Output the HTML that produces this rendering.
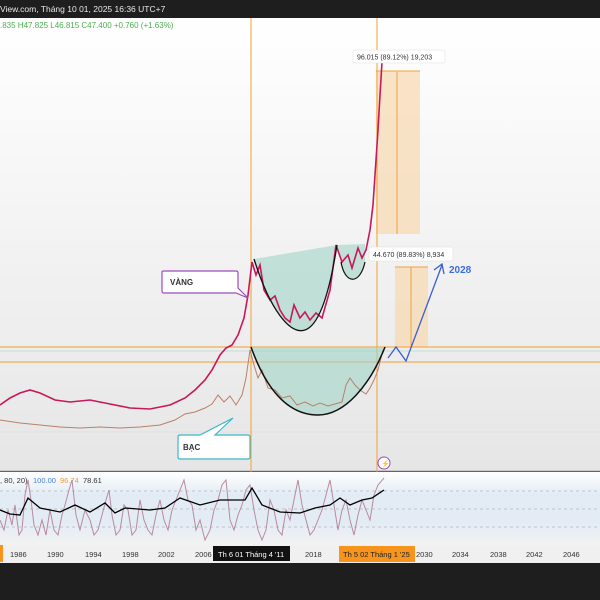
<!DOCTYPE html><html><head><style>
body{margin:0;width:600px;height:600px;overflow:hidden;background:#1e1e1e;font-family:"Liberation Sans",sans-serif}
</style></head><body>
<svg width="600" height="600" xmlns="http://www.w3.org/2000/svg" style="position:absolute;left:0;top:0">
<defs><linearGradient id="bg" x1="0" y1="0" x2="0" y2="1"><stop offset="0" stop-color="#ffffff"/><stop offset="1" stop-color="#e6e6e6"/></linearGradient>
<linearGradient id="ib" x1="0" y1="0" x2="0" y2="1"><stop offset="0" stop-color="#ffffff"/><stop offset="0.3" stop-color="#e3ecf5"/><stop offset="0.7" stop-color="#e3ecf5"/><stop offset="1" stop-color="#f2f2f2"/></linearGradient></defs>
<rect x="0" y="0" width="600" height="18" fill="#1e1e1e"/>
<text x="0" y="12" font-size="8.5" fill="#e8e8e8">View.com, Tháng 10 01, 2025 16:36 UTC+7</text>
<rect x="0" y="18" width="600" height="453" fill="url(#bg)"/>
<text x="0" y="28" font-size="8" fill="#4caf50">.835  H47.825  L46.815  C47.400  +0.760 (+1.63%)</text>
<line x1="0" y1="432" x2="600" y2="432" stroke="#d8d8d8" stroke-width="0.6"/>
<rect x="376" y="71" width="44" height="163" fill="#f7d9b0" opacity="0.7"/>
<line x1="397" y1="72" x2="397" y2="234" stroke="#f0a040" stroke-width="1"/>
<line x1="376" y1="71" x2="420" y2="71" stroke="#f0a040"/>
<rect x="395" y="267" width="33" height="80" fill="#f7d9b0" opacity="0.7"/>
<line x1="411" y1="267" x2="411" y2="347" stroke="#f0a040"/>
<line x1="395" y1="267" x2="428" y2="267" stroke="#f0a040"/>
<line x1="251" y1="18" x2="251" y2="563" stroke="#f5a030" stroke-width="1"/>
<line x1="377" y1="18" x2="377" y2="563" stroke="#f5a030" stroke-width="1"/>
<line x1="0" y1="347" x2="600" y2="347" stroke="#f5a030" stroke-width="1"/>
<line x1="0" y1="351" x2="600" y2="351" stroke="#9cd0c0" stroke-width="0.6"/>
<line x1="0" y1="362" x2="600" y2="362" stroke="#f5a030" stroke-width="1"/>
<!-- teal fills -->
<path d="M254 259 L337 245 C330 290 320 325 305 330 C290 335 270 310 254 259 Z" fill="#9fd4c6" opacity="0.6"/>
<path d="M337 245 L365 244 L365 262 C360 285 345 285 341 262 Z" fill="#9fd4c6" opacity="0.6"/>
<path d="M251 347 L385 347 C370 385 345 415 318 415 C295 415 270 400 251 347 Z" fill="#9fd4c6" opacity="0.6"/>
<!-- silver -->
<path d="M0 420 L20 423 L40 425 L60 427 L80 428 L100 427 L120 428 L140 427 L160 425 L175 420 L185 414 L195 412 L205 408 L212 404 L218 395 L224 402 L230 396 L236 405 L242 395 L246 378 L250 350 L254 365 L258 378 L262 370 L268 388 L275 390 L282 398 L290 396 L297 405 L305 402 L313 406 L320 403 L328 406 L335 404 L342 402 L346 385 L350 378 L355 385 L360 390 L366 394 L370 388 L374 380 L378 370 L383 350" fill="none" stroke="#b9806a" stroke-width="1"/>
<!-- gold -->
<path d="M0 405 L10 398 L20 393 L30 390 L40 393 L55 400 L70 402 L90 400 L110 404 L130 408 L150 409 L170 405 L185 398 L195 390 L205 380 L212 370 L220 355 L226 348 L232 345 L238 335 L244 318 L248 295 L252 262 L256 275 L260 265 L264 290 L270 300 L275 296 L280 310 L285 318 L290 322 L294 305 L300 318 L305 312 L310 320 L316 313 L322 318 L330 290 L336 245 L342 262 L348 255 L352 268 L358 248 L362 258 L366 250 L370 230 L373 205 L376 160 L378 130 L380 95 L382 62" fill="none" stroke="#c8185a" stroke-width="1.6"/>
<!-- black arcs -->
<path d="M254 259 C270 310 290 335 305 330 C320 325 330 290 337 245" fill="none" stroke="#111" stroke-width="1.3"/>
<path d="M341 262 C345 285 360 285 365 262" fill="none" stroke="#111" stroke-width="1.2"/>
<path d="M251 347 C270 400 295 415 318 415 C345 415 370 385 385 347" fill="none" stroke="#111" stroke-width="1.5"/>
<path d="M388 358 L396 347 L406 361 L442 265 M434 270 L442 264 L444 274" fill="none" stroke="#3a5fd0" stroke-width="1.3"/>
<text x="449" y="273" font-size="10" font-weight="bold" fill="#3a6fd8">2028</text>
<rect x="353" y="50" width="92" height="13" rx="2" fill="#fff" stroke="#ddd" stroke-width="0.5"/>
<text x="357" y="59.5" font-size="7" fill="#333">96.015 (89.12%) 19,203</text>
<rect x="369" y="247" width="84" height="14" rx="2" fill="#fff" stroke="#ddd" stroke-width="0.5"/>
<text x="373" y="257" font-size="7" fill="#333">44.670 (89.83%) 8,934</text>
<path d="M162 272 Q162 271 164 271 L236 271 Q238 271 238 273 L238 288 L248 298 L236 293 L164 293 Q162 293 162 291 Z" fill="#fff" stroke="#9b4dbb" stroke-width="1.2"/>
<text x="170" y="285" font-size="8" font-weight="bold" fill="#333">VÀNG</text>
<path d="M178 437 L178 457 Q178 459 180 459 L248 459 Q250 459 250 457 L250 437 Q250 435 248 435 L215 435 L233 418 L200 435 L180 435 Q178 435 178 437 Z" fill="#fff" stroke="#3cb8c8" stroke-width="1.2"/>
<text x="183" y="450" font-size="8" font-weight="bold" fill="#333">BẠC</text>
<circle cx="384" cy="463" r="6" fill="#fff" stroke="#9b4dbb"/>
<text x="381" y="466" font-size="7" fill="#9b4dbb">⚡</text>
<line x1="0" y1="471" x2="600" y2="471" stroke="#aaa" stroke-width="1"/>
<rect x="0" y="472" width="600" height="73" fill="url(#ib)"/>
<line x1="0" y1="491" x2="600" y2="491" stroke="#999" stroke-dasharray="3,3" stroke-width="0.6"/>
<line x1="0" y1="509" x2="600" y2="509" stroke="#999" stroke-dasharray="3,3" stroke-width="0.6"/>
<line x1="0" y1="527" x2="600" y2="527" stroke="#999" stroke-dasharray="3,3" stroke-width="0.6"/>
<text x="0" y="483" font-size="7.5" fill="#333">, 80, 20)</text><text x="33" y="483" font-size="7.5" fill="#4a7fd8">100.00</text><text x="60" y="483" font-size="7.5" fill="#f0a030">96.74</text><text x="83" y="483" font-size="7.5" fill="#333">78.61</text>
<path d="M0 520 L4 530 L8 510 L12 525 L15 505 L19 535 L22 530 L25 495 L28 480 L31 500 L34 525 L38 535 L42 520 L46 535 L50 510 L54 530 L58 535 L62 515 L65 505 L69 490 L72 480 L76 515 L80 530 L85 510 L90 520 L94 535 L98 530 L102 515 L106 500 L109 490 L112 515 L116 535 L120 530 L124 505 L128 510 L132 535 L136 530 L140 500 L144 520 L148 530 L152 535 L156 515 L160 500 L164 520 L168 530 L172 510 L176 500 L180 490 L184 480 L188 500 L192 505 L196 530 L200 520 L205 540 L210 530 L214 510 L218 500 L222 485 L226 480 L230 520 L234 530 L238 515 L242 505 L246 490 L250 485 L254 510 L258 530 L262 540 L266 530 L270 500 L274 510 L278 530 L282 535 L286 510 L290 520 L294 500 L298 480 L302 505 L306 520 L310 535 L314 530 L318 520 L322 510 L326 495 L330 480 L334 505 L338 530 L342 510 L346 500 L350 520 L354 535 L358 515 L362 500 L366 510 L370 520 L374 495 L378 485 L384 478" fill="none" stroke="#b88aa0" stroke-width="1"/>
<path d="M0 510 L10 514 L20 515 L28 498 L40 508 L60 512 L75 505 L90 512 L105 503 L115 513 L125 508 L150 510 L165 508 L180 498 L200 505 L220 500 L235 500 L245 500 L252 488 L262 505 L280 512 L300 513 L315 508 L330 505 L340 498 L350 505 L362 500 L372 498 L384 490" fill="none" stroke="#000" stroke-width="1.3"/>
<rect x="0" y="545" width="600" height="18" fill="#f0f0f0"/>
<rect x="0" y="545" width="3" height="17" fill="#f7941d"/>
<g font-size="7.5" fill="#333">
<text x="10" y="557">1986</text><text x="47" y="557">1990</text><text x="85" y="557">1994</text><text x="122" y="557">1998</text><text x="158" y="557">2002</text><text x="195" y="557">2006</text><text x="305" y="557">2018</text><text x="416" y="557">2030</text><text x="452" y="557">2034</text><text x="490" y="557">2038</text><text x="526" y="557">2042</text><text x="563" y="557">2046</text></g>
<rect x="213" y="546" width="77" height="15" fill="#111"/>
<text x="218" y="557" font-size="7.5" fill="#fff">Th 6 01 Tháng 4 '11</text>
<rect x="339" y="546" width="76" height="16" fill="#f7941d"/>
<text x="343" y="557" font-size="7.5" fill="#222">Th 5 02 Tháng 1 '25</text>
</svg>
</body></html>
